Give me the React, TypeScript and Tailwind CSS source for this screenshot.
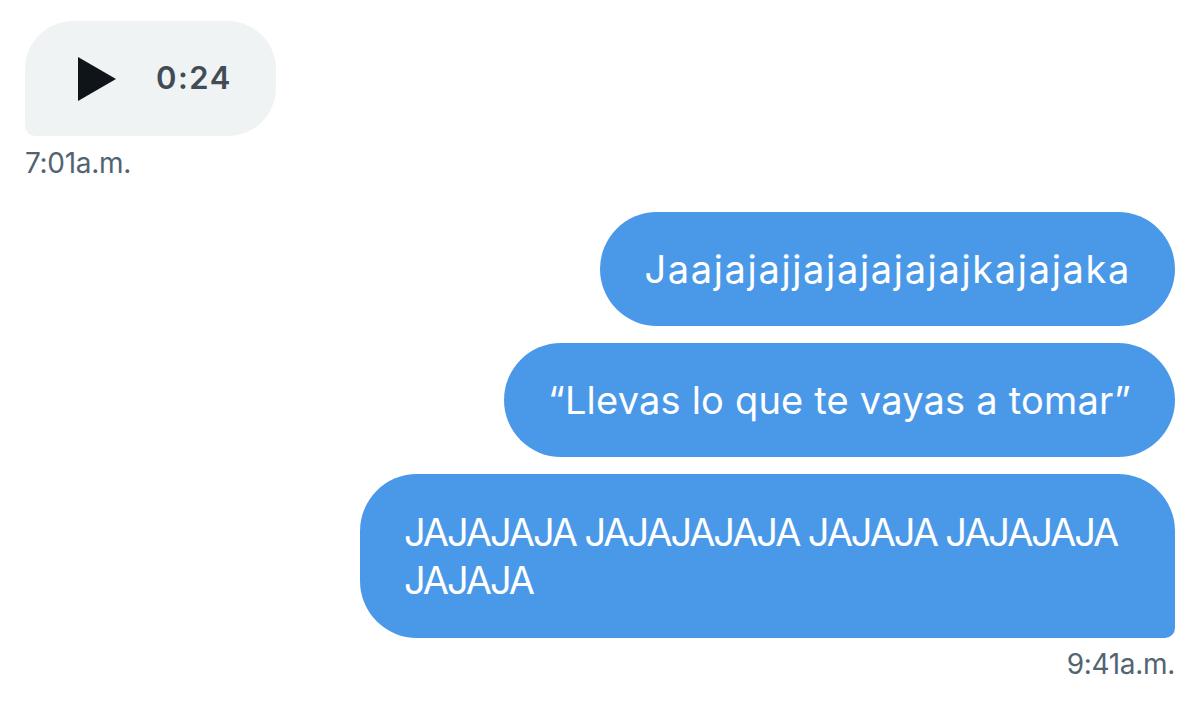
export default function App() {
  return (
    <div className="w-[1200px] h-[713px] bg-white px-[25px] pt-[21px] font-['Inter','Liberation_Sans',sans-serif] overflow-hidden">
      {/* received audio message */}
      <div className="flex flex-col items-start">
        <div className="flex items-center h-[115px] w-[251px] pl-[53px] bg-[#eff3f4] rounded-[48px] rounded-bl-[10px]">
          <svg width="38" height="44" viewBox="0 0 38 44">
            <path d="M0 0 L38 22 L0 44 Z" fill="#0f1419" />
          </svg>
          <span className="ml-[40px] text-[31px] font-semibold tracking-[1.5px] text-[#434c55]">0:24</span>
        </div>
        <span className="mt-[10px] text-[28px] leading-[34px] tracking-[-0.3px] text-[#536471]">7:01a.m.</span>
      </div>

      {/* sent messages */}
      <div className="mt-[32px] flex flex-col items-end gap-[17px]">
        <div className="h-[114px] flex items-center px-[44px] bg-[#4a99e8] rounded-full text-white text-[38px] leading-[48px] tracking-[1.65px]">
          Jaajajajjajajajajajkajajaka
        </div>
        <div className="h-[114px] flex items-center px-[44px] bg-[#4a99e8] rounded-full text-white text-[38px] leading-[48px] tracking-[0.2px]">
          “Llevas lo que te vayas a tomar”
        </div>
        <div className="w-[815px] py-[34px] px-[44px] bg-[#4a99e8] rounded-[57px] rounded-br-[10px] text-white text-[38px] leading-[48px] tracking-[-2.1px]">
          JAJAJAJA JAJAJAJAJA JAJAJA JAJAJAJA JAJAJA
        </div>
      </div>
      <div className="mt-[9px] text-right text-[28px] leading-[34px] tracking-[-0.3px] text-[#536471]">9:41a.m.</div>
    </div>
  );
}
